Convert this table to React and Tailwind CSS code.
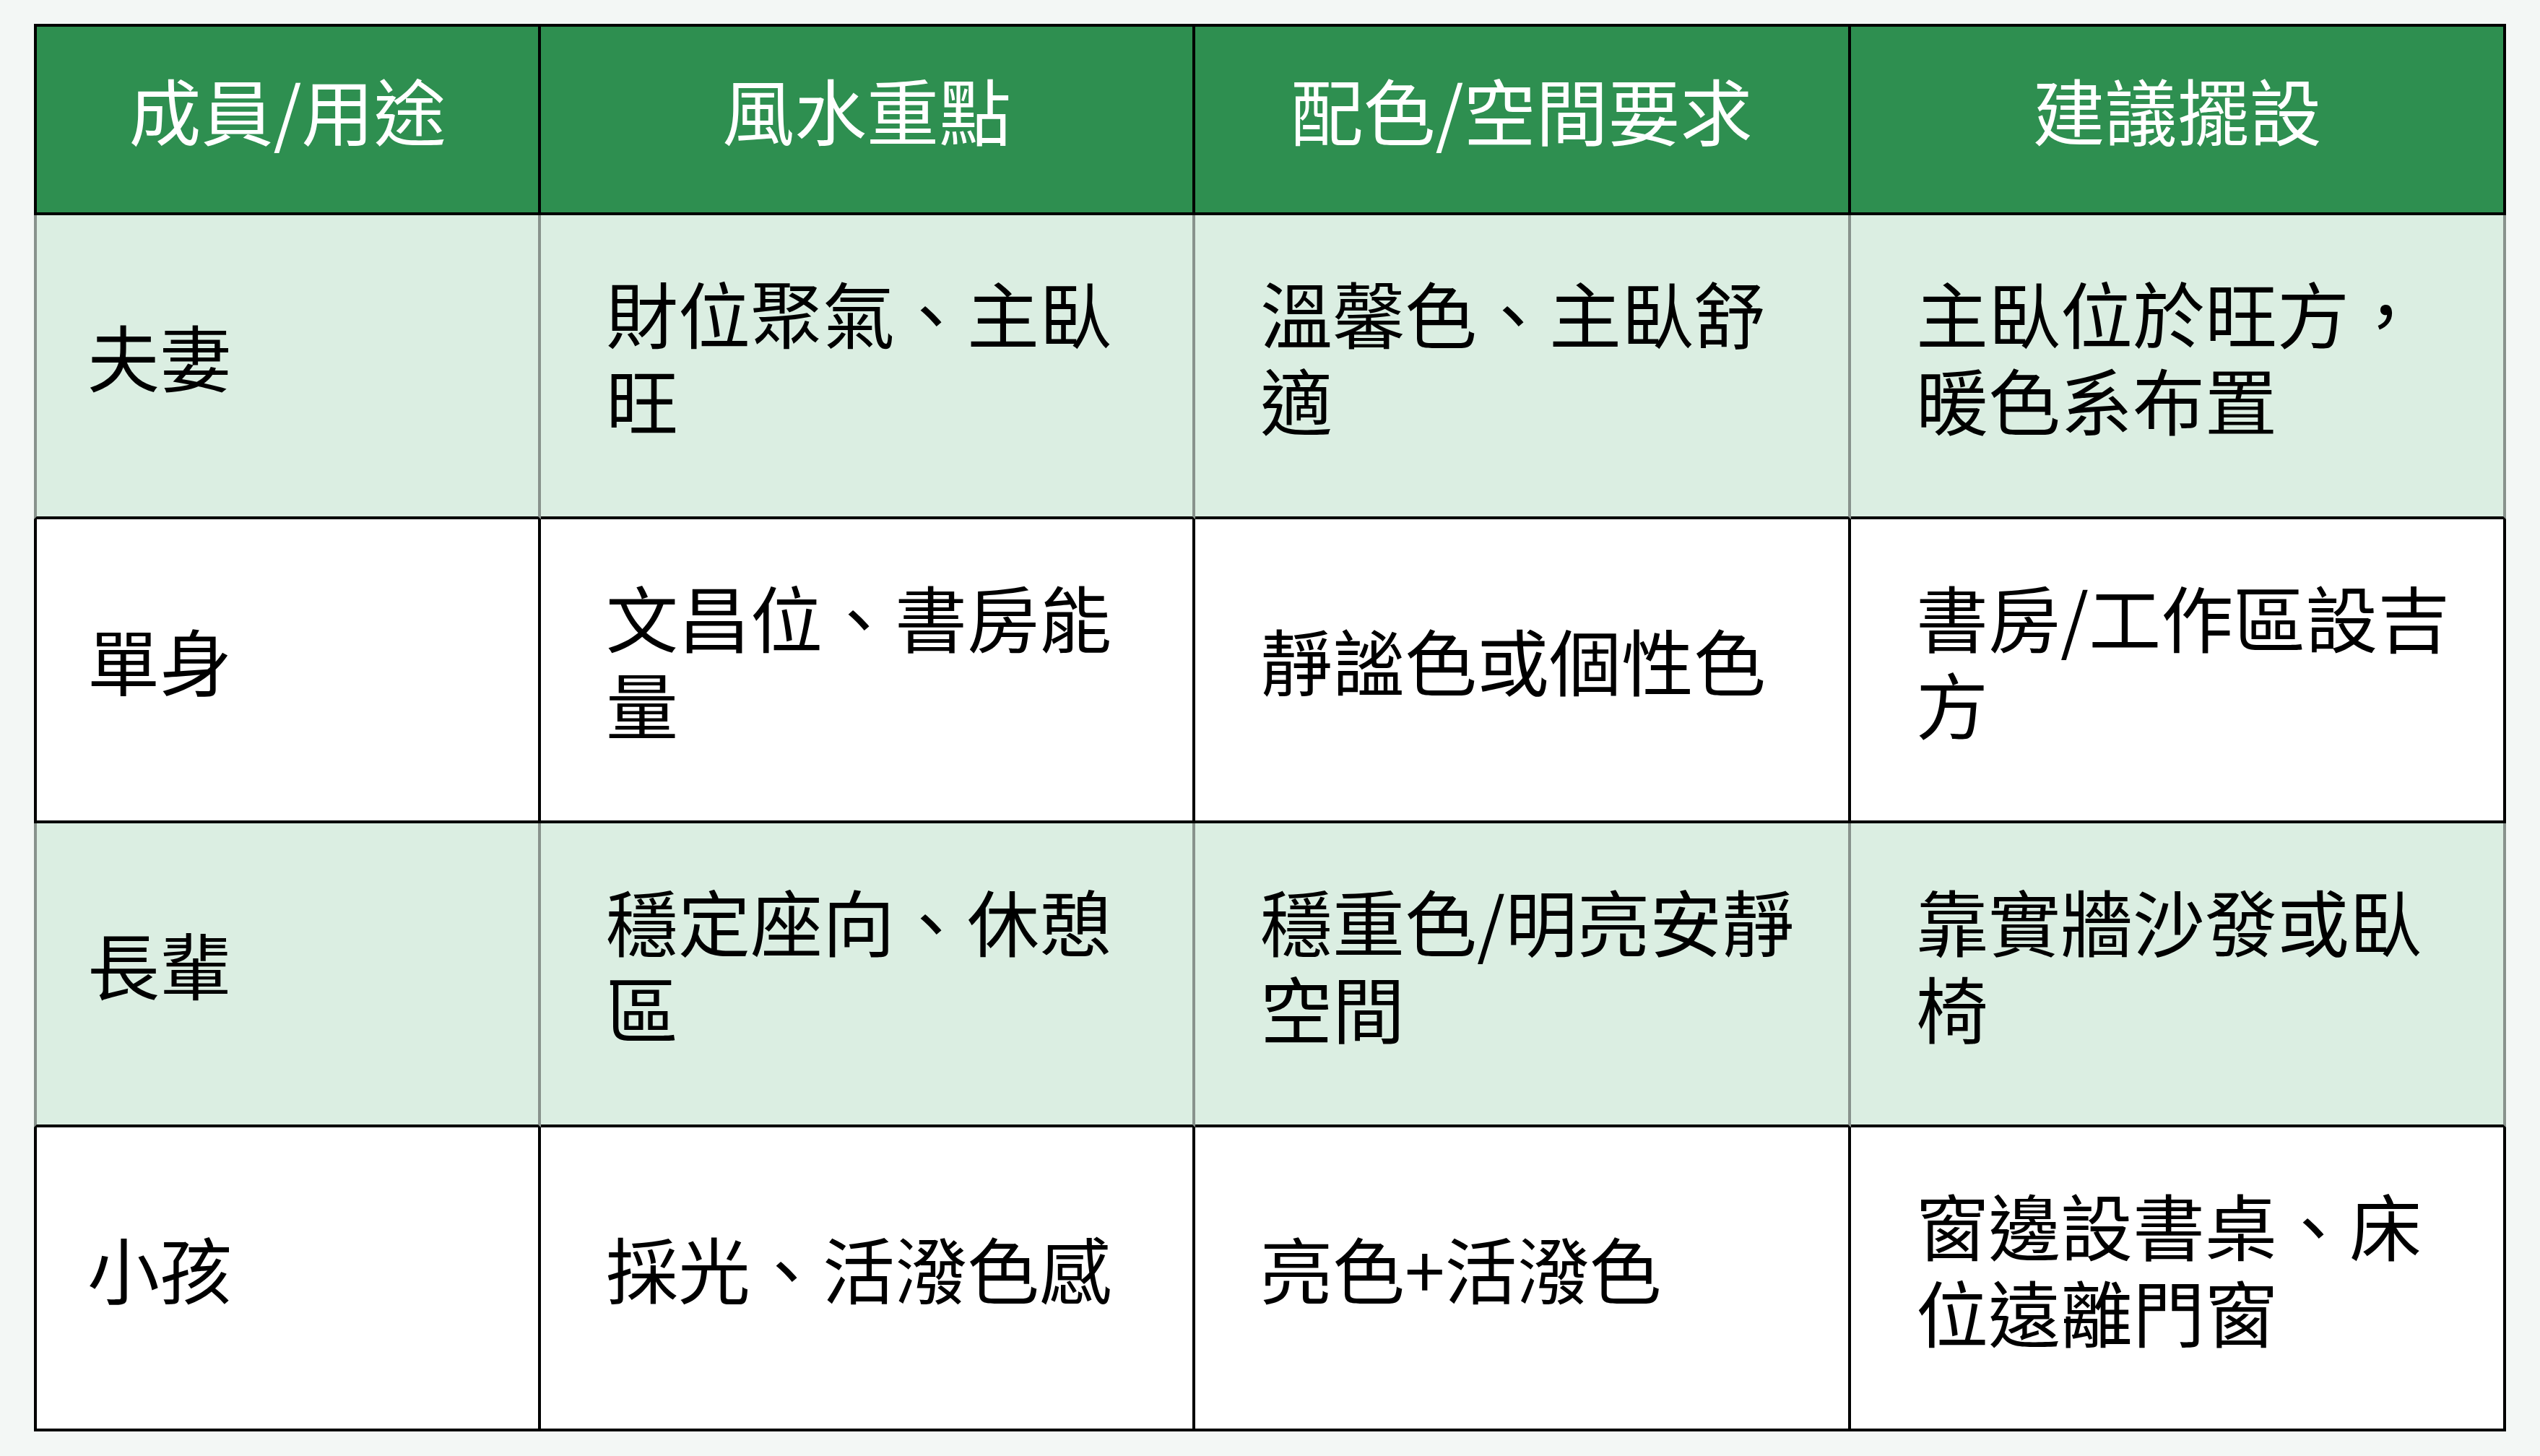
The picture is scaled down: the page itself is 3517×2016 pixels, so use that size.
import React from 'react'

const headers = ['成員/用途', '風水重點', '配色/空間要求', '建議擺設']

const rows = [
  { member: '夫妻', focus: '財位聚氣、主臥旺', color: '溫馨色、主臥舒適', setup: '主臥位於旺方，暖色系布置' },
  { member: '單身', focus: '文昌位、書房能量', color: '靜謐色或個性色', setup: '書房/工作區設吉方' },
  { member: '長輩', focus: '穩定座向、休憩區', color: '穩重色/明亮安靜空間', setup: '靠實牆沙發或臥椅' },
  { member: '小孩', focus: '採光、活潑色感', color: '亮色+活潑色', setup: '窗邊設書桌、床位遠離門窗' },
]

const font = { fontFamily: '"Noto Sans CJK TC", "Noto Sans", sans-serif' }

const App = () => {
  return (
    <div className="min-h-screen w-full bg-[#f3f7f5] pt-[33px] pl-[47px]" style={font}>
      <div className="grid w-[3423px] grid-cols-[702px_906px_908px_907px]">
        {headers.map((h, i) => (
          <div
            key={h}
            className={
              'flex h-[265px] items-center justify-center border-t-4 border-r-4 border-b-4 border-black bg-[#2e8f50] pb-[30px] text-[100px] leading-[120px] font-normal text-white ' +
              (i === 0 ? 'border-l-4' : '')
            }
          >
            {h}
          </div>
        ))}

        {rows.map((row, index) => {
          const green = index % 2 === 0
          const cells = [row.member, row.focus, row.color, row.setup]
          return cells.map((text, i) => (
            <div
              key={index + '-' + i}
              className={
                'flex h-[421px] items-center border-r-4 border-b-4 pb-[30px] text-[100px] leading-[120px] text-black ' +
                (green
                  ? 'bg-[#dbeee2] border-r-[#88928c] border-b-black '
                  : 'bg-white border-black ') +
                (i === 0
                  ? 'border-l-4 pl-[70px] pr-[40px] ' + (green ? 'border-l-[#88928c]' : 'border-l-black')
                  : 'pl-[90px] pr-[50px]')
              }
            >
              <span>{text}</span>
            </div>
          ))
        })}
      </div>
    </div>
  )
}

export default App
